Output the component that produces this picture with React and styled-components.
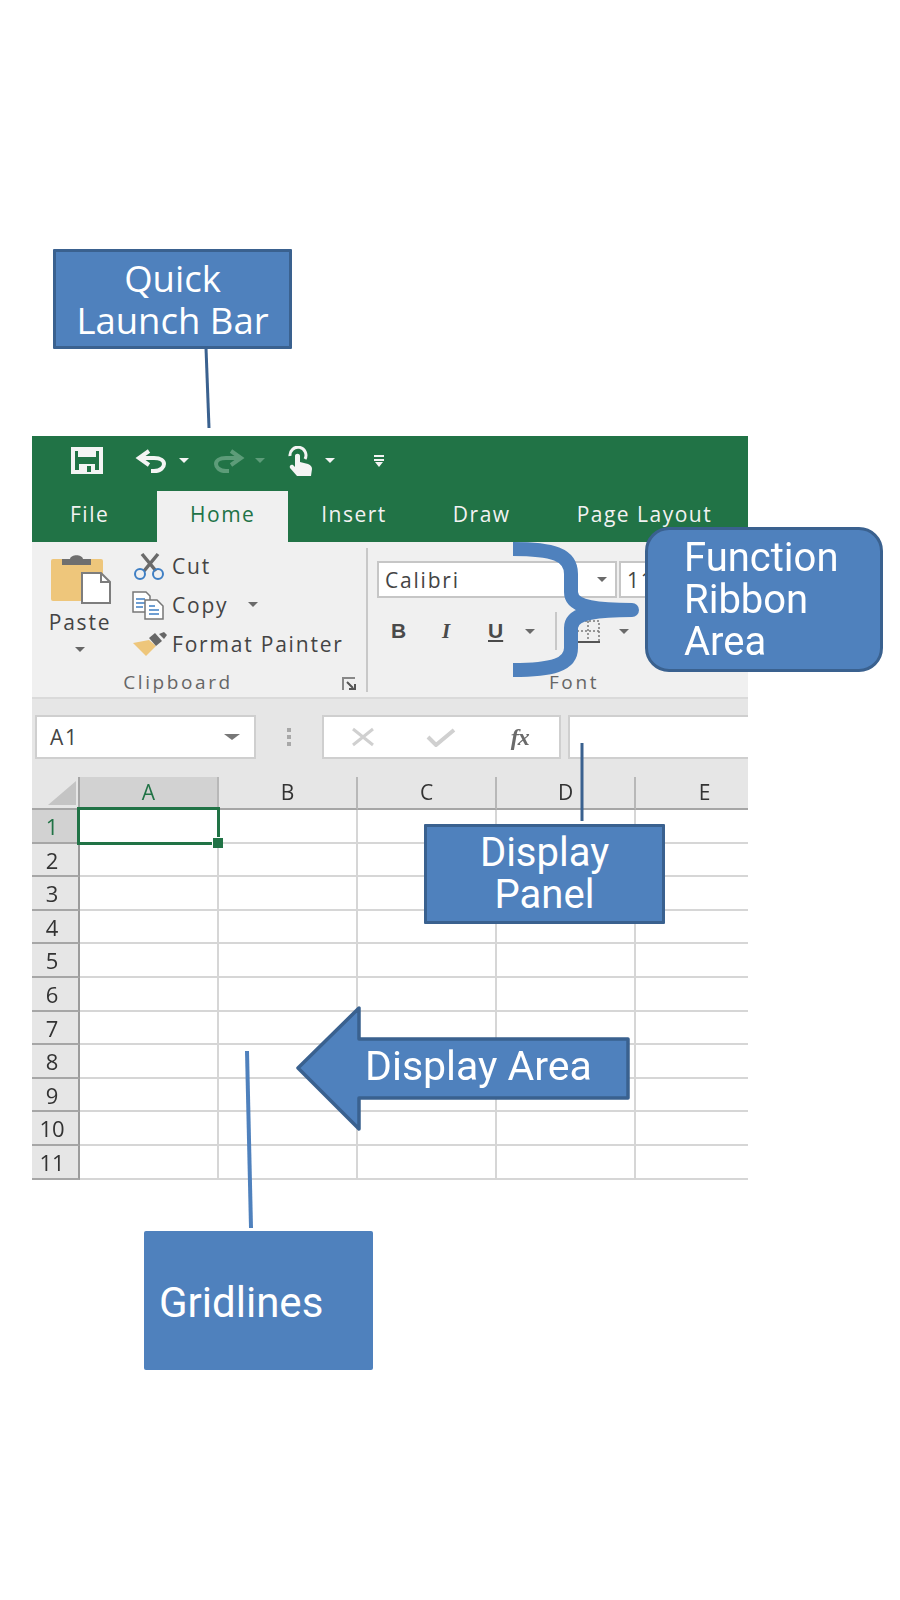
import React from "react";
import styled, { createGlobalStyle } from "styled-components";

const GREEN = "#217346";
const BLUE = "#4f81bd";
const EDGE = "#3a618f";
const UI_FONT = `"Open Sans", "Liberation Sans", sans-serif`;

const Global = createGlobalStyle`
  html, body { margin: 0; padding: 0; background: #fff; }
  #root { width: 900px; height: 1600px; }
`;

const Page = styled.div`
  position: relative;
  width: 900px;
  height: 1600px;
  padding: 436px 0 0 32px;
  box-sizing: border-box;
  overflow: hidden;
  background: #fff;
  font-family: ${UI_FONT};
`;

const Sheet = styled.div`
  width: 716px;
  overflow: hidden;
  filter: blur(0.55px);
  color: #444;
  font-size: 21px;
  letter-spacing: 1.8px;
`;

/* ---- title bar ---- */
const TitleBar = styled.div`
  height: 55px;
  box-sizing: border-box;
  padding: 0 0 6px 39px;
  background: ${GREEN};
  display: flex;
  align-items: center;
`;

const QatButton = styled.span`
  display: flex;
  align-items: center;
  margin-right: ${p => p.$gap || 0}px;
`;

const Mirror = styled.span`
  display: flex;
  transform: scaleX(-1);
`;

const Caret = styled.i`
  display: block;
  width: 0;
  height: 0;
  border-left: 5px solid transparent;
  border-right: 5px solid transparent;
  border-top: 5px solid ${p => p.$color || "#6a6a6a"};
  margin-left: ${p => p.$left || 0}px;
`;

const NameCaret = styled(Caret)`
  margin-right: 14px;
  border-width: 6px 8px 0;
`;

const TabBar = styled.div`
  height: 51px;
  background: ${GREEN};
  display: flex;
  padding-left: 5px;
`;

const Tab = styled.div`
  flex-shrink: 0;
  padding: 0 33px;
  line-height: 47px;
  letter-spacing: 1.5px;
  color: #f2f2f2;
  white-space: nowrap;
  &.active {
    margin-left: 15px;
    padding: 0;
    width: 131px;
    text-align: center;
    background: #f0f0f0;
    color: ${GREEN};
  }
`;

/* ---- ribbon ---- */
const Ribbon = styled.div`
  height: 157px;
  box-sizing: border-box;
  background: #f0f0f0;
  border-bottom: 2px solid #dadada;
  display: flex;
`;

const Group = styled.div`
  position: relative;
  width: ${p => p.$w}px;
  display: flex;
  flex-direction: column;
`;

const GroupBody = styled.div`
  height: 126px;
  display: flex;
`;

const GroupLabel = styled.div`
  width: ${p => p.$w}px;
  text-align: center;
  font-size: 19px;
  letter-spacing: 2.6px;
  line-height: 28px;
  color: #666;
`;

const Launcher = styled.svg`
  position: absolute;
  right: 10px;
  bottom: 6px;
`;

const Separator = styled.div`
  width: 2px;
  height: 144px;
  margin-top: 6px;
  background: #c8c8c8;
`;

const PasteButton = styled.div`
  width: 96px;
  padding-top: 11px;
  display: flex;
  flex-direction: column;
  align-items: center;
  line-height: 34px;
`;

const PasteCaret = styled(Caret)`
  margin-top: 8px;
`;

const SmallButtons = styled.div`
  padding: 7px 0 0 4px;
  display: flex;
  flex-direction: column;
  gap: 6px;
`;

const SmallButton = styled.div`
  height: 33px;
  display: flex;
  align-items: center;
  white-space: nowrap;
  svg { width: 36px; margin-right: 4px; }
`;

const FontBody = styled.div`
  padding: 19px 0 0 9px;
  display: flex;
  flex-direction: column;
`;

const ComboRow = styled.div`
  display: flex;
  gap: 2px;
`;

const Combo = styled.div`
  width: ${p => p.$w}px;
  height: 37px;
  box-sizing: border-box;
  background: #fff;
  border: 2px solid #c6c6c6;
  display: flex;
  align-items: center;
  justify-content: space-between;
  padding: 0 8px 0 6px;
  overflow: hidden;
`;

const FormatRow = styled.div`
  margin-top: 14px;
  display: flex;
  align-items: center;
  height: 38px;
`;

const FormatBtn = styled.span`
  width: ${p => p.$w || 47}px;
  padding-left: ${p => p.$pad || 14}px;
  box-sizing: border-box;
  font-family: ${p => (p.$italic ? `"Liberation Serif", serif` : `"Liberation Sans", sans-serif`)};
  font-style: ${p => (p.$italic ? "italic" : "normal")};
  font-weight: 700;
  font-size: 21px;
  text-decoration: ${p => (p.$under ? "underline" : "none")};
  color: #4a4a4a;
  letter-spacing: 0;
`;

const Divider = styled.span`
  width: 2px;
  height: 38px;
  margin: 0 18px 0 20px;
  background: #c8c8c8;
`;

/* ---- formula bar ---- */
const FormulaBar = styled.div`
  height: 78px;
  box-sizing: border-box;
  background: #e6e6e6;
  padding: 16px 0 18px 3px;
  display: flex;
`;

const Field = styled.div`
  width: ${p => p.$w}px;
  margin-right: ${p => p.$gap || 0}px;
  box-sizing: border-box;
  background: #fff;
  border: 2px solid #cfcfcf;
  display: flex;
  align-items: center;
  &.open { flex: 1; border-right: 0; margin-right: 0; }
`;

const NameText = styled.span`
  flex: 1;
  padding-left: 13px;
`;

const Grip = styled.div`
  width: 66px;
  display: flex;
  flex-direction: column;
  align-items: center;
  justify-content: center;
  gap: 3px;
  i { width: 4px; height: 4px; background: #a8a8a8; display: block; }
`;

const IconSlot = styled.span`
  width: 79px;
  display: flex;
  justify-content: center;
  font-family: "Liberation Serif", serif;
  font-style: italic;
  font-weight: 700;
  font-size: 24px;
  letter-spacing: -1px;
  color: #6a6a6a;
`;

/* ---- grid ---- */
const Grid = styled.div`
  display: grid;
  grid-template-columns: 48px repeat(5, 139px);
  grid-template-rows: 33px repeat(11, 33.6px);
`;

const Corner = styled.div`
  background: #e6e6e6;
  border-bottom: 2px solid #a6a6a6;
  border-right: 2px solid #a6a6a6;
  box-sizing: border-box;
  display: flex;
  align-items: flex-end;
  justify-content: flex-end;
  padding: 0 2px 3px 0;
`;

const ColHead = styled.div`
  background: ${p => (p.$on ? "#d2d2d2" : "#e6e6e6")};
  color: ${p => (p.$on ? GREEN : "#333")};
  border-bottom: 2px solid #a6a6a6;
  border-right: 2px solid #b8b8b8;
  box-sizing: border-box;
  text-align: center;
  line-height: 31px;
  letter-spacing: 0;
`;

const RowHead = styled.div`
  background: ${p => (p.$on ? "#d2d2d2" : "#e6e6e6")};
  color: ${p => (p.$on ? GREEN : "#333")};
  border-bottom: 2px solid #a6a6a6;
  border-right: 2px solid #9c9c9c;
  box-sizing: border-box;
  padding: 0 9px 0 3px;
  text-align: center;
  font-size: 22px;
  line-height: 32px;
  letter-spacing: 0;
`;

const Cell = styled.div`
  position: relative;
  border-bottom: 2px solid #d6d6d6;
  border-right: 2px solid #d6d6d6;
  box-sizing: border-box;
  background: #fff;
`;

const Selection = styled.div`
  position: absolute;
  z-index: 2;
  left: -3px;
  top: -3px;
  right: -3px;
  bottom: -3px;
  border: 3px solid ${GREEN};
  &::after {
    content: "";
    position: absolute;
    right: -6px;
    bottom: -6px;
    width: 11px;
    height: 11px;
    background: ${GREEN};
    border-left: 1px solid #fff;
    border-top: 1px solid #fff;
    box-sizing: border-box;
  }
`;

/* ---- annotations laid over the screenshot ---- */
const Overlay = styled.svg`
  position: absolute;
  left: 0;
  top: 0;
  pointer-events: none;
`;

const Callout = styled.div`
  position: absolute;
  left: ${p => p.$x}px;
  top: ${p => p.$y}px;
  width: ${p => p.$w}px;
  height: ${p => p.$h}px;
  box-sizing: border-box;
  background: ${p => (p.$bare ? "transparent" : BLUE)};
  border: ${p => (p.$flat || p.$bare ? "0" : `3.5px solid ${EDGE}`)};
  border-radius: ${p => p.$r || 1}px;
  color: #fff;
  display: flex;
  flex-direction: column;
  justify-content: center;
  align-items: ${p => (p.$center ? "center" : "flex-start")};
  padding-left: ${p => p.$pad || 0}px;
  padding-top: ${p => p.$top || 0}px;
  font-family: ${p => (p.$calibri ? `"Open Sans", sans-serif` : `Roboto, sans-serif`)};
  font-size: ${p => p.$size || 40}px;
  line-height: 42px;
  white-space: nowrap;
`;

const Save = () => (
  <svg width="32" height="27" viewBox="0 0 32 27">
    <path d="M2 2h28v23H2z" fill="none" stroke="#f4f4f4" strokeWidth="4" />
    <path d="M7 2h18v8H7zM8 17h16v8H8z" fill="#f4f4f4" />
    <path d="M16 19h4v6h-4z" fill={GREEN} />
  </svg>
);

const Undo = ({ color }) => (
  <svg width="32" height="24" viewBox="0 0 32 24" fill="none" stroke={color} strokeWidth="4">
    <path d="M14 2 4 9l10 7" strokeLinejoin="miter" />
    <path d="M5 9h14c7 0 10 3 10 6s-3 7-10 7h-3" />
  </svg>
);

const Touch = () => (
  <svg width="28" height="30" viewBox="0 0 28 30">
    <path d="M5 10a8 8 0 1 1 15 3" fill="none" stroke="#f4f4f4" strokeWidth="3" />
    <path
      d="M10 10c0-3 5-3 5 0v6l8 2c3 1 4 3 4 5l-1 7H12L5 22c-1-2 1-4 3-3l2 2z"
      fill="#f4f4f4"
    />
  </svg>
);

const Customize = () => (
  <svg width="12" height="12" viewBox="0 0 12 12" fill="#f4f4f4">
    <path d="M1 0h10v2H1zM1 4h10v2H1zM2 7h8l-4 5z" />
  </svg>
);

const Paste = () => (
  <svg width="62" height="52" viewBox="0 0 62 52">
    <rect x="2" y="6" width="52" height="42" rx="2" fill="#eec67b" />
    <path d="M13 6h8c1-5 12-5 13 0h8v6H13z" fill="#6f6f6f" />
    <path d="M33 20h19l9 9v21H33z" fill="#fff" stroke="#7d7d7d" strokeWidth="2" />
    <path d="M52 20v9h9" fill="none" stroke="#7d7d7d" strokeWidth="2" />
  </svg>
);

const Cut = () => (
  <svg height="28" viewBox="0 0 36 28" fill="none">
    <path d="M10 2l14 17M26 2 12 19" stroke="#6a6a6a" strokeWidth="3.5" />
    <circle cx="8" cy="22" r="5" stroke="#3f7fc4" strokeWidth="2" />
    <circle cx="26" cy="22" r="5" stroke="#3f7fc4" strokeWidth="2" />
  </svg>
);

const Copy = () => (
  <svg height="30" viewBox="0 0 36 30" fill="none">
    <path d="M1 2h13l4 4v16H1z" fill="#fff" stroke="#777" strokeWidth="1.5" />
    <path d="M4 9h9M4 13h9M4 17h7" stroke="#3f7fc4" strokeWidth="1.5" />
    <path d="M13 10h12l6 6v13H13z" fill="#fff" stroke="#777" strokeWidth="1.5" />
    <path d="M17 16h6M17 20h10M17 24h10" stroke="#3f7fc4" strokeWidth="1.5" />
  </svg>
);

const Painter = () => (
  <svg height="26" viewBox="0 0 36 26">
    <path d="M1 12 17 9l7 6-10 10z" fill="#eec67b" />
    <path d="M17 7l6-5 7 8-6 5z" fill="#666" />
    <path d="M27 3l5-2 3 3-3 4z" fill="#666" />
  </svg>
);

const Borders = () => (
  <svg width="26" height="26" viewBox="0 0 26 26" fill="none">
    <path d="M2 3h22v20M2 3v20M13 3v20M2 13h22" stroke="#7a7a7a" strokeWidth="1.5" strokeDasharray="2 2" />
    <path d="M1 24h24" stroke="#555" strokeWidth="2" />
  </svg>
);

const rows = Array.from({ length: 11 }, (_, i) => i + 1);
const cols = ["A", "B", "C", "D", "E"];

export default function App() {
  return (
    <Page>
      <Global />
      <Sheet>
        <TitleBar>
          <QatButton $gap={32}><Save /></QatButton>
          <QatButton $gap={24}><Undo color="#f4f4f4" /><Caret $left={12} $color="#f4f4f4" /></QatButton>
          <QatButton $gap={20}>
            <Mirror><Undo color="#5d9c79" /></Mirror>
            <Caret $left={10} $color="#5d9c79" />
          </QatButton>
          <QatButton $gap={38}><Touch /><Caret $left={12} $color="#f4f4f4" /></QatButton>
          <QatButton><Customize /></QatButton>
        </TitleBar>
        <TabBar>
          <Tab>File</Tab>
          <Tab className="active">Home</Tab>
          <Tab>Insert</Tab>
          <Tab>Draw</Tab>
          <Tab>Page Layout</Tab>
        </TabBar>

        <Ribbon>
          <Group $w={334}>
            <GroupBody>
              <PasteButton>
                <Paste />
                <span>Paste</span>
                <PasteCaret $color="#666" />
              </PasteButton>
              <SmallButtons>
                <SmallButton><Cut />Cut</SmallButton>
                <SmallButton><Copy />Copy<Caret $left={20} /></SmallButton>
                <SmallButton><Painter />Format Painter</SmallButton>
              </SmallButtons>
            </GroupBody>
            <GroupLabel $w={292}>Clipboard</GroupLabel>
            <Launcher width="14" height="14" viewBox="0 0 14 14" fill="none">
              <path d="M1 13V1h12" stroke="#888" strokeWidth="2" />
              <path d="M5 5l6 6M7 12h6V7" stroke="#555" strokeWidth="2" />
            </Launcher>
          </Group>
          <Separator />
          <Group $w={380}>
            <GroupBody>
              <FontBody>
                <ComboRow>
                  <Combo $w={240}>Calibri<Caret /></Combo>
                  <Combo $w={60}>11</Combo>
                </ComboRow>
                <FormatRow>
                  <FormatBtn>B</FormatBtn>
                  <FormatBtn $italic $pad={18}>I</FormatBtn>
                  <FormatBtn $under $w={45} $pad={17}>U</FormatBtn>
                  <Caret $left={9} />
                  <Divider />
                  <Borders />
                  <Caret $left={18} />
                </FormatRow>
              </FontBody>
            </GroupBody>
            <GroupLabel $w={412}>Font</GroupLabel>
          </Group>
        </Ribbon>

        <FormulaBar>
          <Field $w={221}>
            <NameText>A1</NameText>
            <NameCaret $color="#777" />
          </Field>
          <Grip><i /><i /><i /></Grip>
          <Field $w={239} $gap={7}>
            <IconSlot>
              <svg width="26" height="20" viewBox="0 0 26 20" stroke="#d0d0d0" strokeWidth="3">
                <path d="M3 2l20 16M23 2 3 18" />
              </svg>
            </IconSlot>
            <IconSlot>
              <svg width="30" height="20" viewBox="0 0 30 20" fill="none" stroke="#d0d0d0" strokeWidth="4">
                <path d="M2 10l8 8L28 3" />
              </svg>
            </IconSlot>
            <IconSlot>fx</IconSlot>
          </Field>
          <Field className="open" />
        </FormulaBar>

        <Grid>
          <Corner>
            <svg width="28" height="24" viewBox="0 0 28 24"><path d="M28 0v24H0z" fill="#c4c4c4" /></svg>
          </Corner>
          {cols.map((c, i) => (
            <ColHead key={c} $on={i === 0}>{c}</ColHead>
          ))}
          {rows.map(r => (
            <React.Fragment key={r}>
              <RowHead $on={r === 1}>{r}</RowHead>
              {cols.map((c, i) => (
                <Cell key={c}>
                  {r === 1 && i === 0 && <Selection />}
                </Cell>
              ))}
            </React.Fragment>
          ))}
        </Grid>
      </Sheet>

      <Overlay width="900" height="1600" viewBox="0 0 900 1600" fill="none">
        <path d="M206 348 209 428" stroke={EDGE} strokeWidth="3" />
        <path d="M582 743V821" stroke={EDGE} strokeWidth="3" />
        <path d="M247 1051 251 1228" stroke={BLUE} strokeWidth="4" />
        <path
          d="M513 549C552 549 571 554 571 574V592C571 606 590 610 632 610C590 610 571 614 571 628V648C571 665 552 670 513 670"
          stroke={BLUE}
          strokeWidth="14"
          strokeLinecap="butt"
        />
        <circle cx="632" cy="610" r="7" fill={BLUE} />
        <path
          d="M298 1068 359 1008V1039H628V1098H359V1129Z"
          fill={BLUE}
          stroke={EDGE}
          strokeWidth="3.5"
          strokeLinejoin="round"
        />
      </Overlay>

      <Callout $x={53} $y={249} $w={239} $h={100} $center $calibri $size={36.5}>
        <span>Quick</span>
        <span>Launch Bar</span>
      </Callout>
      <Callout $x={645} $y={527} $w={238} $h={145} $r={24} $pad={36}>
        <span>Function</span>
        <span>Ribbon</span>
        <span>Area</span>
      </Callout>
      <Callout $x={424} $y={824} $w={241} $h={100} $center>
        <span>Display</span>
        <span>Panel</span>
      </Callout>
      <Callout $x={365} $y={1035} $w={260} $h={61} $bare $size={41}>
        <span>Display Area</span>
      </Callout>
      <Callout $x={144} $y={1231} $w={229} $h={139} $flat $r={2} $pad={15} $top={4} $size={42}>
        <span>Gridlines</span>
      </Callout>
    </Page>
  );
}
